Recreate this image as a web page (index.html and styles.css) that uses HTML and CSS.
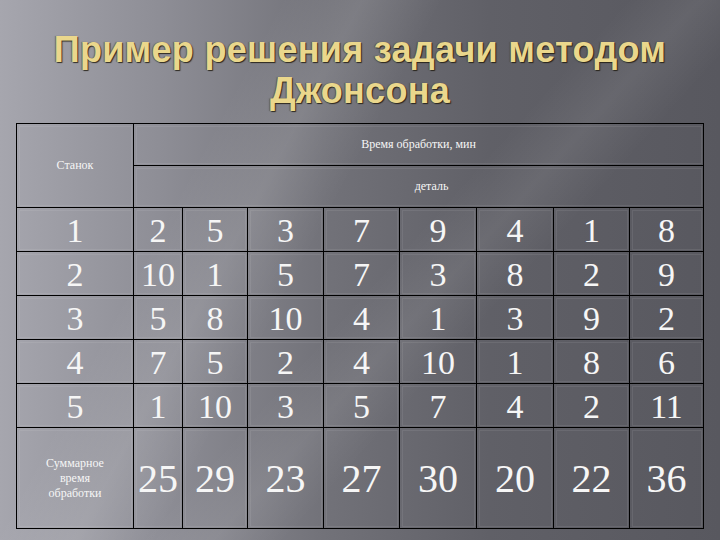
FILE: index.html
```html
<!DOCTYPE html>
<html lang="ru">
<head>
<meta charset="utf-8">
<title>Пример решения задачи методом Джонсона</title>
<link rel="stylesheet" href="styles.css">
</head>
<body>
<div class="slide">
  <h1 class="title">Пример решения задачи методом<br>Джонсона</h1>
  <table class="grid">
    <colgroup>
      <col class="w0"><col class="w1"><col class="w2"><col class="w3"><col class="w4">
      <col class="w5"><col class="w6"><col class="w7"><col class="w8">
    </colgroup>
    <tr class="head">
      <td rowspan="2" class="small">Станок</td>
      <td colspan="8" class="small">Время обработки, мин</td>
    </tr>
    <tr class="head">
      <td colspan="8" class="small detail">деталь</td>
    </tr>
    <tr class="row"><td>1</td><td>2</td><td>5</td><td>3</td><td>7</td><td>9</td><td>4</td><td>1</td><td>8</td></tr>
    <tr class="row"><td>2</td><td>10</td><td>1</td><td>5</td><td>7</td><td>3</td><td>8</td><td>2</td><td>9</td></tr>
    <tr class="row"><td>3</td><td>5</td><td>8</td><td>10</td><td>4</td><td>1</td><td>3</td><td>9</td><td>2</td></tr>
    <tr class="row"><td>4</td><td>7</td><td>5</td><td>2</td><td>4</td><td>10</td><td>1</td><td>8</td><td>6</td></tr>
    <tr class="row"><td>5</td><td>1</td><td>10</td><td>3</td><td>5</td><td>7</td><td>4</td><td>2</td><td>11</td></tr>
    <tr class="total">
      <td class="small label">Суммарное<br>время<br>обработки</td>
      <td>25</td><td>29</td><td>23</td><td>27</td><td>30</td><td>20</td><td>22</td><td>36</td>
    </tr>
  </table>
</div>
</body>
</html>
```
FILE: styles.css
```css
html, body {
  margin: 0;
  padding: 0;
}
body {
  width: 720px;
  height: 540px;
  overflow: hidden;
}
.slide {
  width: 720px;
  height: 540px;
  box-sizing: border-box;
  background:
    linear-gradient(118deg, rgba(255,255,255,0) 28%, rgba(255,255,255,0.10) 36%, rgba(255,255,255,0) 44%),
    linear-gradient(132deg, rgba(255,255,255,0) 52%, rgba(255,255,255,0.07) 58%, rgba(255,255,255,0) 64%),
    linear-gradient(to right, #a6a6ae 0%, #8e8e96 22%, #727279 45%, #606067 68%, #58585f 100%);
  padding-top: 29px;
}
.title {
  margin: 0 0 12px 0;
  font-family: "Liberation Sans", Arial, sans-serif;
  font-weight: bold;
  font-size: 36px;
  line-height: 41px;
  letter-spacing: 0.3px;
  text-align: center;
  color: #ead78c;
  text-shadow: 1px 1px 1px rgba(30, 26, 14, 0.85), -1px 0 1px rgba(60, 52, 30, 0.5);
}
.grid {
  margin-left: 16px;
  width: 688px;
  border-collapse: collapse;
  table-layout: fixed;
  font-family: "Liberation Serif", "Times New Roman", serif;
  color: #f6f6f6;
}
.w0 { width: 117px; }
.w1 { width: 49px; }
.w2 { width: 65px; }
.w3 { width: 76px; }
.w4 { width: 76px; }
.w5 { width: 77px; }
.w6 { width: 77px; }
.w7 { width: 76px; }
.w8 { width: 74px; }
.grid td {
  border: 1px solid #000;
  padding: 0;
  text-align: center;
  vertical-align: middle;
  outline: 1px solid rgba(255, 255, 255, 0.08);
  outline-offset: -3px;
}
.head { height: 42px; }
.row { height: 44px; }
.total { height: 101px; }
.row td {
  font-size: 34px;
  line-height: 1;
  padding-top: 2px;
}
.total td {
  font-size: 40px;
  line-height: 1;
  padding-top: 2px;
}
.grid td.small {
  font-size: 12px;
  line-height: 15px;
  padding-top: 0;
}
.grid td.detail {
  padding-left: 26px;
}
```
